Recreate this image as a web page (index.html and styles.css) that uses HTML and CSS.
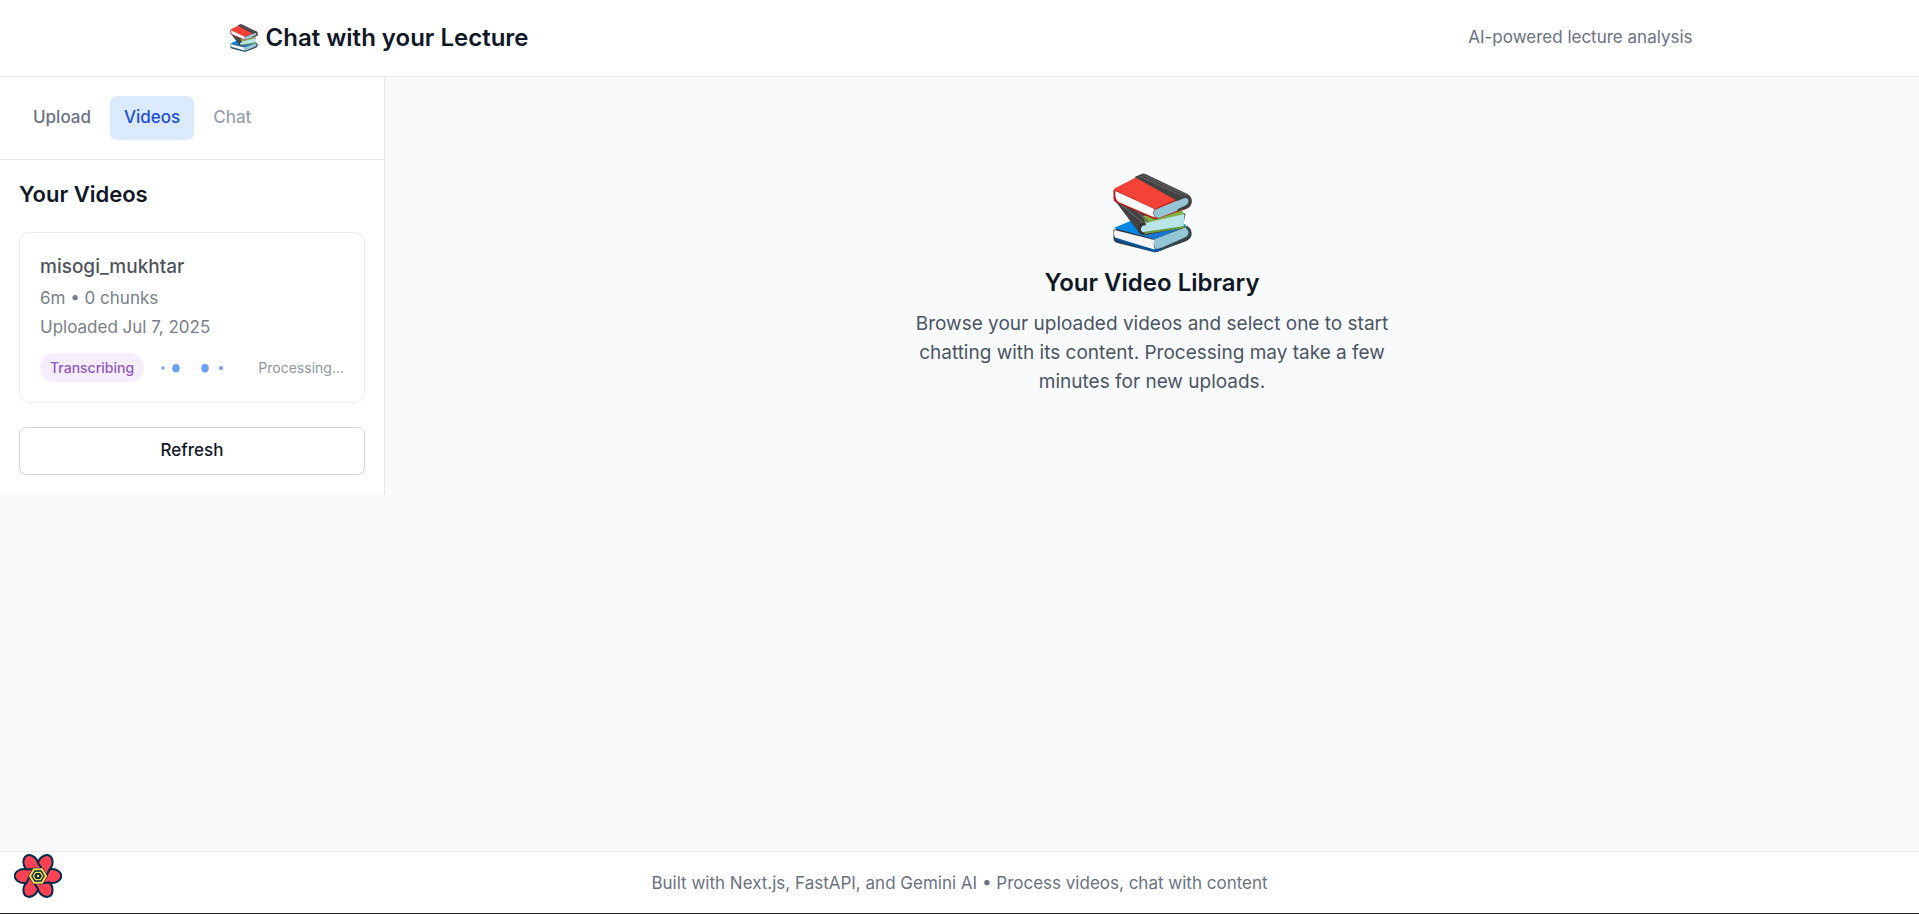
FILE: index.html
```html
<!DOCTYPE html>
<html lang="en">
<head>
<meta charset="utf-8">
<title>Chat with your Lecture</title>
<link rel="stylesheet" href="styles.css">
</head>
<body>
<svg class="defs" aria-hidden="true">
  <symbol id="books" viewBox="0 0 80 80">
    <path d="M1 57v8q0 4 4 5l36 9q3 1 6-1l27-10q6-3 5-9-1-5-6-6L38 44 1 57z" fill="#2f3a40"/>
    <path d="M42 66l32-12q4 2 3 6-1 4-5 6L44 77q-4-5-2-11z" fill="#94c5d4"/>
    <path d="M2 57l40 10q-2 5 1 10L5 67q-5-4-3-10z" fill="#f5f5f5"/>
    <path d="M1 55L35 41l39 12-32 13z" fill="#0288e5"/>
    <path d="M58 47l16 5-32 14-14-4z" fill="#1976d2"/>
    <path d="M3 66l39 12 7-2" fill="none" stroke="#01579b" stroke-width="2.4"/>
    <path d="M74 54q4 3 3 7-1 4-5 5L49 76" fill="none" stroke="#37474f" stroke-width="2.4"/>
    <path d="M2 27l24 32q2 3 7 3l37-7 3-14-23-12z" fill="#424242"/>
    <path d="M33 49l36-10 3 3-1 12-41 7q-5-5 3-12z" fill="#b9e4ea"/>
    <path d="M30 43l38-7 4 5-39 9z" fill="#7cb342"/>
    <path d="M31 60l41-6" fill="none" stroke="#689f38" stroke-width="2"/>
    <path d="M8 31l25 21M17 32l19 17" fill="none" stroke="#616161" stroke-width="1.5"/>
    <path d="M33 51q-6 0-6 5 0 4 5 5" fill="none" stroke="#333" stroke-width="2.5"/>
    <path d="M1 17v8q0 4 4 5l36 16q3 1 6-1l27-9q6-3 5-9-1-5-6-6L30 5z" fill="#b71c1c"/>
    <path d="M42 37l31-13q5 2 4 6-1 4-5 5L46 45q-6-1-4-8z" fill="#94c5d4"/>
    <path d="M3 18l39 18q-3 4 1 9L6 29q-4-3-3-11z" fill="#fafafa"/>
    <path d="M1 16L28 2l46 20-32 14z" fill="#f44336"/>
    <path d="M22 4l7-3q2-1 4 0l42 20q5 3 4 8 0 5-6 7l-8 2v-2l7-3q4-2 4-5 0-3-4-3l-7 3z" fill="#424242"/>
    <path d="M27 3l43 20M31 2l43 20" fill="none" stroke="#616161" stroke-width="1.3"/>
  </symbol>
</svg>
<header class="header">
  <div class="header-inner">
    <h1 class="brand"><svg class="brand-icon" aria-hidden="true"><use href="#books"/></svg>Chat with your Lecture</h1>
    <p class="tagline">AI-powered lecture analysis</p>
  </div>
</header>
<div class="layout">
  <aside class="sidebar">
    <nav class="tabs">
      <button class="tab" type="button">Upload</button>
      <button class="tab tab-active" type="button">Videos</button>
      <button class="tab" type="button" disabled>Chat</button>
    </nav>
    <section class="videos">
      <h2 class="videos-title">Your Videos</h2>
      <article class="card">
        <h3 class="card-title">misogi_mukhtar</h3>
        <p class="card-meta">6m • 0 chunks</p>
        <p class="card-meta">Uploaded Jul 7, 2025</p>
        <div class="status">
          <span class="badge">Transcribing</span>
          <svg class="loader" viewBox="0 0 62 12" aria-hidden="true">
            <circle cx="2" cy="6" r="1.7"/><ellipse cx="15" cy="6.2" rx="3.7" ry="4.2"/><ellipse cx="44" cy="6.2" rx="3.7" ry="4.2"/><circle cx="60" cy="6" r="2"/>
          </svg>
          <span class="processing">Processing...</span>
        </div>
      </article>
      <button class="refresh" type="button">Refresh</button>
    </section>
  </aside>
  <main class="main">
    <svg class="hero-icon" aria-hidden="true"><use href="#books"/></svg>
    <h2 class="hero-title">Your Video Library</h2>
    <p class="hero-text">Browse your uploaded videos and select one to start chatting with its content. Processing may take a few minutes for new uploads.</p>
  </main>
</div>
<footer class="footer">
  <p>Built with Next.js, FastAPI, and Gemini AI • Process videos, chat with content</p>
</footer>
<button class="devtools" type="button" aria-label="Open query devtools">
  <svg class="devtools-icon" viewBox="-72 -72 144 144" aria-hidden="true">
    <defs>
      <path id="petal" d="M34-20C56-25 70-10 70 0S56 25 34 20L7 22 22 5Z"/>
    </defs>
    <g fill="#ff4154" stroke="#002c4b" stroke-width="6" stroke-linejoin="round">
      <use href="#petal"/><use href="#petal" transform="rotate(60)"/><use href="#petal" transform="rotate(120)"/><use href="#petal" transform="rotate(180)"/><use href="#petal" transform="rotate(240)"/><use href="#petal" transform="rotate(300)"/>
    </g>
    <path d="M-29 0L-15-25H15L29 0 15 25H-15Z" fill="#002c4b"/>
    <path d="M-24 0L-12-20H12L24 0 12 20H-12Z" fill="none" stroke="#ffd94c" stroke-width="6"/>
    <path d="M-14 0L-7-11H7L14 0 7 11H-7Z" fill="none" stroke="#ffd94c" stroke-width="4"/>
    <circle r="4" fill="#ffd94c"/>
  </svg>
</button>
</body>
</html>
```
FILE: styles.css
```css
* { box-sizing: border-box; margin: 0; }

body {
  display: flex;
  flex-direction: column;
  min-height: 100vh;
  background: #f9fafb;
  color: #101828;
  font-family: Inter, "Liberation Sans", sans-serif;
  font-size: 17px;
  line-height: 24px;
}

button { font: inherit; cursor: pointer; }

.defs { display: none; }

.header {
  background: #fff;
  border-bottom: 1px solid #e5e7eb;
}

.header-inner {
  display: flex;
  align-items: center;
  justify-content: space-between;
  max-width: 1538px;
  margin: 0 auto;
  padding: 19px 36px 19px 39px;
}

.brand {
  display: flex;
  align-items: center;
  gap: 8px;
  font-size: 24px;
  font-weight: 600;
  line-height: 38px;
}

.brand-icon { width: 28px; height: 28px; }

.tagline { padding-bottom: 2px; color: #6a7282; }

.layout { display: flex; flex: 1; align-items: flex-start; }

.sidebar {
  flex: none;
  width: 385px;
  background: #fff;
  border-right: 1px solid #e5e7eb;
}

.tabs {
  display: flex;
  gap: 5px;
  padding: 19px;
  border-bottom: 1px solid #e5e7eb;
}

.tab {
  padding: 9px 14px 11px;
  border: 0;
  border-radius: 7px;
  background: transparent;
  color: #6a7282;
  font-weight: 500;
}

.tab-active { background: #dbeafe; color: #1d4ed8; }

.tab:disabled { color: #99a1af; cursor: default; }

.videos { padding: 19px; }

.videos-title {
  margin-bottom: 23px;
  font-size: 22px;
  font-weight: 600;
  line-height: 30px;
}

.card {
  padding: 20px;
  border: 1px solid #e5e7eb;
  border-radius: 10px;
  opacity: 0.75;
}

.card-title { font-size: 19px; font-weight: 500; line-height: 28px; }

.card-meta { margin-top: 5px; color: #4a5565; }

.status {
  display: flex;
  align-items: center;
  margin-top: 14px;
  font-size: 14px;
  line-height: 19px;
}

.badge {
  padding: 5px 10px;
  border-radius: 15px;
  background: #f3e8ff;
  color: #6b21a8;
  font-weight: 500;
}

.loader { width: 62px; height: 12px; margin-left: 17px; fill: #3b82f6; }

.processing { margin-left: auto; color: #6a7282; }

.refresh {
  width: 100%;
  margin-top: 24px;
  padding: 10px 19px 12px;
  border: 1px solid #d1d5dc;
  border-radius: 7px;
  background: #fff;
  color: #101828;
  font-weight: 500;
}

.main {
  display: flex;
  flex: 1;
  flex-direction: column;
  align-items: center;
  padding: 96px 38px;
  text-align: center;
}

.hero-icon { width: 81px; height: 80px; }

.hero-title {
  margin-top: 13px;
  font-size: 24px;
  font-weight: 600;
  line-height: 34px;
}

.hero-text {
  max-width: 538px;
  margin-top: 9px;
  color: #4a5565;
  font-size: 19px;
  line-height: 29px;
}

.footer {
  padding: 19px 19px 18px;
  border-top: 1px solid #e5e7eb;
  border-bottom: 1px solid #1f2328;
  background: #fff;
  color: #6a7282;
  text-align: center;
}

.devtools {
  position: fixed;
  bottom: 14px;
  left: 14px;
  padding: 0;
  border: 0;
  background: none;
}

.devtools-icon { display: block; width: 48px; height: 48px; }
```
